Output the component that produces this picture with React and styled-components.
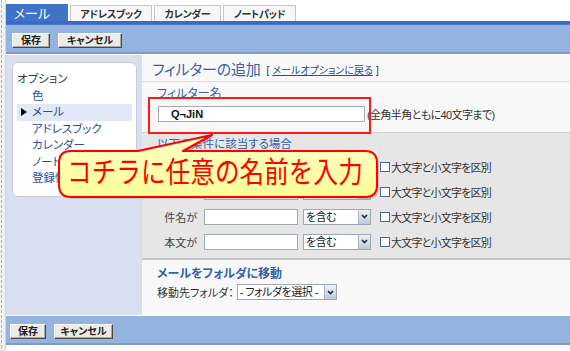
import React from 'react';
import styled, { createGlobalStyle } from 'styled-components';

const GlobalStyle = createGlobalStyle`
  html, body {
    margin: 0;
    padding: 0;
    background: #fff;
  }
  body {
    font-family: "Liberation Sans", "Noto Sans CJK JP", sans-serif;
    font-size: 11px;
    color: #333;
    font-feature-settings: "palt";
  }
`;

const Page = styled.div`
  position: relative;
  display: flex;
  width: 570px;
  height: 351px;
  overflow: hidden;
`;

const Gutter = styled.div`
  flex: none;
  width: 6px;
  box-sizing: border-box;
  border-right: 1px solid #d4d4d4;
  background: repeating-linear-gradient(to bottom, #b5b5b5 0 3px, transparent 3px 5px) 1px 0 / 1px 100% no-repeat, #f1f1f1;
`;

const Frame = styled.div`
  flex: 1;
  display: flex;
  flex-direction: column;
`;

const TabBar = styled.div`
  height: 21px;
  box-sizing: border-box;
  padding-top: 4px;
  display: flex;
  align-items: flex-end;
  gap: 2px;
`;

const Tab = styled.div`
  box-sizing: border-box;
  width: ${p => p.$w}px;
  height: ${p => (p.$active ? 17 : 16)}px;
  display: flex;
  align-items: center;
  justify-content: center;
  padding-right: ${p => (p.$active ? 10 : 0)}px;
  background: ${p => (p.$active ? '#3e73c8' : '#f7f7f7')};
  color: ${p => (p.$active ? '#fff' : '#333')};
  border: ${p => (p.$active ? 'none' : '1px solid #c6c6c6')};
  border-bottom: none;
  font-size: ${p => (p.$active ? 13 : 10)}px;
  font-weight: ${p => (p.$active ? 400 : 700)};
  letter-spacing: ${p => (p.$active ? 0 : -0.3)}px;
`;

const BlueLine = styled.div`
  height: 4px;
  background: linear-gradient(#3a6bc4, #3a6bc4 75%, #5f88d0);
`;

const Toolbar = styled.div`
  height: 27px;
  box-sizing: content-box;
  display: flex;
  align-items: flex-start;
  gap: ${p => p.$gap}px;
  padding-left: ${p => p.$left}px;
  background: #94b3df;
  border-bottom: 2px solid #7f9cc8;
`;

const Button = styled.button`
  box-sizing: border-box;
  margin-top: 8px;
  width: ${p => p.$w}px;
  height: 15px;
  padding: 0;
  background: #ecebe6;
  border: 1px solid;
  border-color: #fafafa #4a4a4a #4a4a4a #fafafa;
  box-shadow: inset -1px -1px 0 #a8a8a8;
  font: 700 10px/13px "Liberation Sans", "Noto Sans CJK JP", sans-serif;
  font-feature-settings: "palt";
  color: #222;
`;

const Body = styled.div`
  margin: 1px 0;
  height: 260px;
  display: flex;
`;

const Sidebar = styled.div`
  flex: none;
  width: 136px;
  background: #d8dff0;
  padding: 7px 0 0 6px;
  box-sizing: border-box;
`;

const NavBox = styled.div`
  box-sizing: border-box;
  width: 125px;
  height: 135px;
  padding: 8px 4px 0;
  background: #fff;
  border: 1px solid #c9ccd4;
  border-radius: 6px;
`;

const NavItem = styled.div`
  position: relative;
  height: 16.5px;
  line-height: 16.5px;
  padding-left: ${p => (p.$indent ? 15 : 0)}px;
  font-size: 11.5px;
  color: ${p => (p.$head ? '#333' : '#2c4a9e')};
  background: ${p => (p.$current ? '#e1e9f8' : 'transparent')};
  white-space: nowrap;
  overflow: hidden;

  &::before {
    content: '';
    display: ${p => (p.$current ? 'block' : 'none')};
    position: absolute;
    left: 4px;
    top: 4px;
    border-left: 6px solid #000;
    border-top: 4px solid transparent;
    border-bottom: 4px solid transparent;
  }
`;

const Main = styled.div`
  flex: 1;
  display: flex;
  flex-direction: column;
  background: #f8f8f8;
`;

const Header = styled.div`
  height: 26px;
  padding-left: 10px;
  display: flex;
  align-items: center;
  gap: 6px;
  border-bottom: 1px solid #dcdcdc;
`;

const Title = styled.span`
  font-size: 15px;
  color: #3862aa;
  letter-spacing: -0.2px;
`;

const BackLink = styled.span`
  font-size: 10px;
  color: #333;
  margin-top: 2px;

  a {
    color: #2c4a9e;
    text-decoration: underline;
    margin: 0 3px;
  }
`;

const NameSection = styled.div`
  height: 51px;
  box-sizing: border-box;
  padding: 4px 0 0 15px;
  border-bottom: 1px solid #cfcfcf;
`;

const SectionTitle = styled.div`
  line-height: 16px;
  font-size: ${p => p.$size || 12}px;
  font-weight: ${p => (p.$bold ? 700 : 400)};
  color: #3560ad;
`;

const FieldRow = styled.div`
  margin-top: ${p => p.$top || 0}px;
  display: flex;
  align-items: center;
  gap: ${p => p.$gap || 0}px;
`;

const TextInput = styled.input`
  box-sizing: border-box;
  width: ${p => p.$w}px;
  height: 16px;
  margin: 0 0 0 ${p => p.$ml || 0}px;
  padding: 0 0 0 ${p => p.$pl || 2}px;
  background: #fff;
  border: 1px solid #a3abb6;
  outline: none;
  font: ${p => (p.$bold ? 700 : 400)} 11px/14px "Liberation Sans", "Noto Sans CJK JP", sans-serif;
  color: #111;
`;

const Note = styled.span`
  margin-left: 2px;
  font-size: 11px;
  letter-spacing: -0.6px;
  color: #333;
`;

const ConditionSection = styled.div`
  height: 127px;
  box-sizing: border-box;
  padding: 3px 0 0 15px;
  background: #e6e6e6;
  border-bottom: 2px solid #c4c4c4;
`;

const Rows = styled.div`
  margin: 2px 0 0 -15px;
`;

const CondRow = styled.div`
  height: 25px;
  display: flex;
  align-items: center;
`;

const RowLabel = styled.span`
  width: 55px;
  text-align: right;
  font-size: 11px;
  color: #444;
`;

const SelectBox = styled.div`
  box-sizing: border-box;
  flex: none;
  width: ${p => p.$w}px;
  height: 16px;
  margin-left: ${p => p.$ml || 0}px;
  display: flex;
  background: #fff;
  border: 1px solid #9ea7b3;
`;

const SelectText = styled.span`
  flex: 1;
  padding-left: 2px;
  line-height: 14px;
  font-size: 11px;
  letter-spacing: -0.5px;
  color: #222;
  white-space: nowrap;
  overflow: hidden;
`;

const SelectArrow = styled.span`
  flex: none;
  width: 11px;
  display: flex;
  align-items: center;
  justify-content: center;
  background: linear-gradient(#eef1f6, #c0c9d8);
  border-left: 1px solid #aab4c4;
`;

const Check = styled.span`
  flex: none;
  box-sizing: border-box;
  width: 10px;
  height: 10px;
  margin: 1px 1px 0 9px;
  background: #fff;
  border: 1px solid #4a6890;
`;

const CheckLabel = styled.span`
  font-size: 11px;
  letter-spacing: -0.8px;
  color: #333;
  white-space: nowrap;
`;

const MoveSection = styled.div`
  flex: 1;
  padding: 6px 0 0 15px;
`;

const PlainLabel = styled.span`
  font-size: 11px;
  color: #333;
`;

const RedFrame = styled.div`
  position: absolute;
  left: 148px;
  top: 97px;
  width: 223px;
  height: 37px;
  box-sizing: border-box;
  border: 2px solid #ff1a1a;
  pointer-events: none;
`;

const Callout = styled.div`
  position: absolute;
  left: 55px;
  top: 132px;
  width: 328px;
  height: 72px;
`;

const CalloutText = styled.div`
  position: absolute;
  left: 12px;
  top: 27px;
  font-size: 29px;
  line-height: 29px;
  color: #ff0000;
  white-space: nowrap;
  font-feature-settings: normal;
  transform: scaleX(0.85);
  transform-origin: left center;
`;

const Arrow = () => (
  <svg width="7" height="5" viewBox="0 0 7 5">
    <path d="M1 1 L3.5 3.6 L6 1" fill="none" stroke="#1e2a44" strokeWidth="1.6" />
  </svg>
);

const Select = ({ w, ml, children }) => (
  <SelectBox $w={w} $ml={ml}>
    <SelectText>{children}</SelectText>
    <SelectArrow><Arrow /></SelectArrow>
  </SelectBox>
);

const Buttons = ({ big }) => (
  <Toolbar $left={big ? 6 : 4} $gap={8}>
    <Button $w={big ? 38 : 36}>保存</Button>
    <Button $w={big ? 64 : 59}>キャンセル</Button>
  </Toolbar>
);

const bubble =
  'M16 19 L83 19 L157 3 L128 19 L310 19 Q322 19 322 31 L322 53 Q322 65 310 65 L16 65 Q4 65 4 53 L4 31 Q4 19 16 19 Z';

const conditions = ['差出人が', '宛先が', '件名が', '本文が'];

export default function App() {
  return (
    <>
      <GlobalStyle />
      <Page>
        <Gutter />
        <Frame>
          <TabBar>
            <Tab $w={62} $active>メール</Tab>
            <Tab $w={82}>アドレスブック</Tab>
            <Tab $w={67}>カレンダー</Tab>
            <Tab $w={73}>ノートパッド</Tab>
          </TabBar>
          <BlueLine />
          <Buttons big />
          <Body>
            <Sidebar>
              <NavBox>
                <NavItem $head>オプション</NavItem>
                <NavItem $indent>色</NavItem>
                <NavItem $indent $current>メール</NavItem>
                <NavItem $indent>アドレスブック</NavItem>
                <NavItem $indent>カレンダー</NavItem>
                <NavItem $indent>ノートパッド</NavItem>
                <NavItem $indent>登録情報</NavItem>
              </NavBox>
            </Sidebar>
            <Main>
              <Header>
                <Title>フィルターの追加</Title>
                <BackLink>[<a>メールオプションに戻る</a>]</BackLink>
              </Header>
              <NameSection>
                <SectionTitle>フィルター名</SectionTitle>
                <FieldRow $top={4}>
                  <TextInput $w={207} $ml={1} $pl={12} $bold readOnly value="Q¬JiN" />
                  <Note>(全角半角ともに40文字まで)</Note>
                </FieldRow>
              </NameSection>
              <ConditionSection>
                <SectionTitle $size={11.5}>以下の条件に該当する場合</SectionTitle>
                <Rows>
                  {conditions.map(c => (
                    <CondRow key={c}>
                      <RowLabel>{c}</RowLabel>
                      <TextInput $w={94} $ml={7} readOnly value="" />
                      <Select w={68} ml={5}>を含む</Select>
                      <Check />
                      <CheckLabel>大文字と小文字を区別</CheckLabel>
                    </CondRow>
                  ))}
                </Rows>
              </ConditionSection>
              <MoveSection>
                <SectionTitle $bold>メールをフォルダに移動</SectionTitle>
                <FieldRow $top={2} $gap={3}>
                  <PlainLabel>移動先フォルダ：</PlainLabel>
                  <Select w={100}>- フォルダを選択 -</Select>
                </FieldRow>
              </MoveSection>
            </Main>
          </Body>
          <Buttons />
        </Frame>

        <RedFrame />
        <Callout>
          <svg width="328" height="72" viewBox="0 0 328 72">
            <defs>
              <linearGradient id="bubbleFill" x1="0" y1="0" x2="0" y2="1">
                <stop offset="0" stopColor="#ffffc8" />
                <stop offset="1" stopColor="#ffff96" />
              </linearGradient>
            </defs>
            <path d={bubble} transform="translate(2 2)" fill="#8a8a8a" opacity="0.35" />
            <path d={bubble} fill="url(#bubbleFill)" stroke="#ff0000" strokeWidth="2" strokeLinejoin="round" />
          </svg>
          <CalloutText>コチラに任意の名前を入力</CalloutText>
        </Callout>
      </Page>
    </>
  );
}
